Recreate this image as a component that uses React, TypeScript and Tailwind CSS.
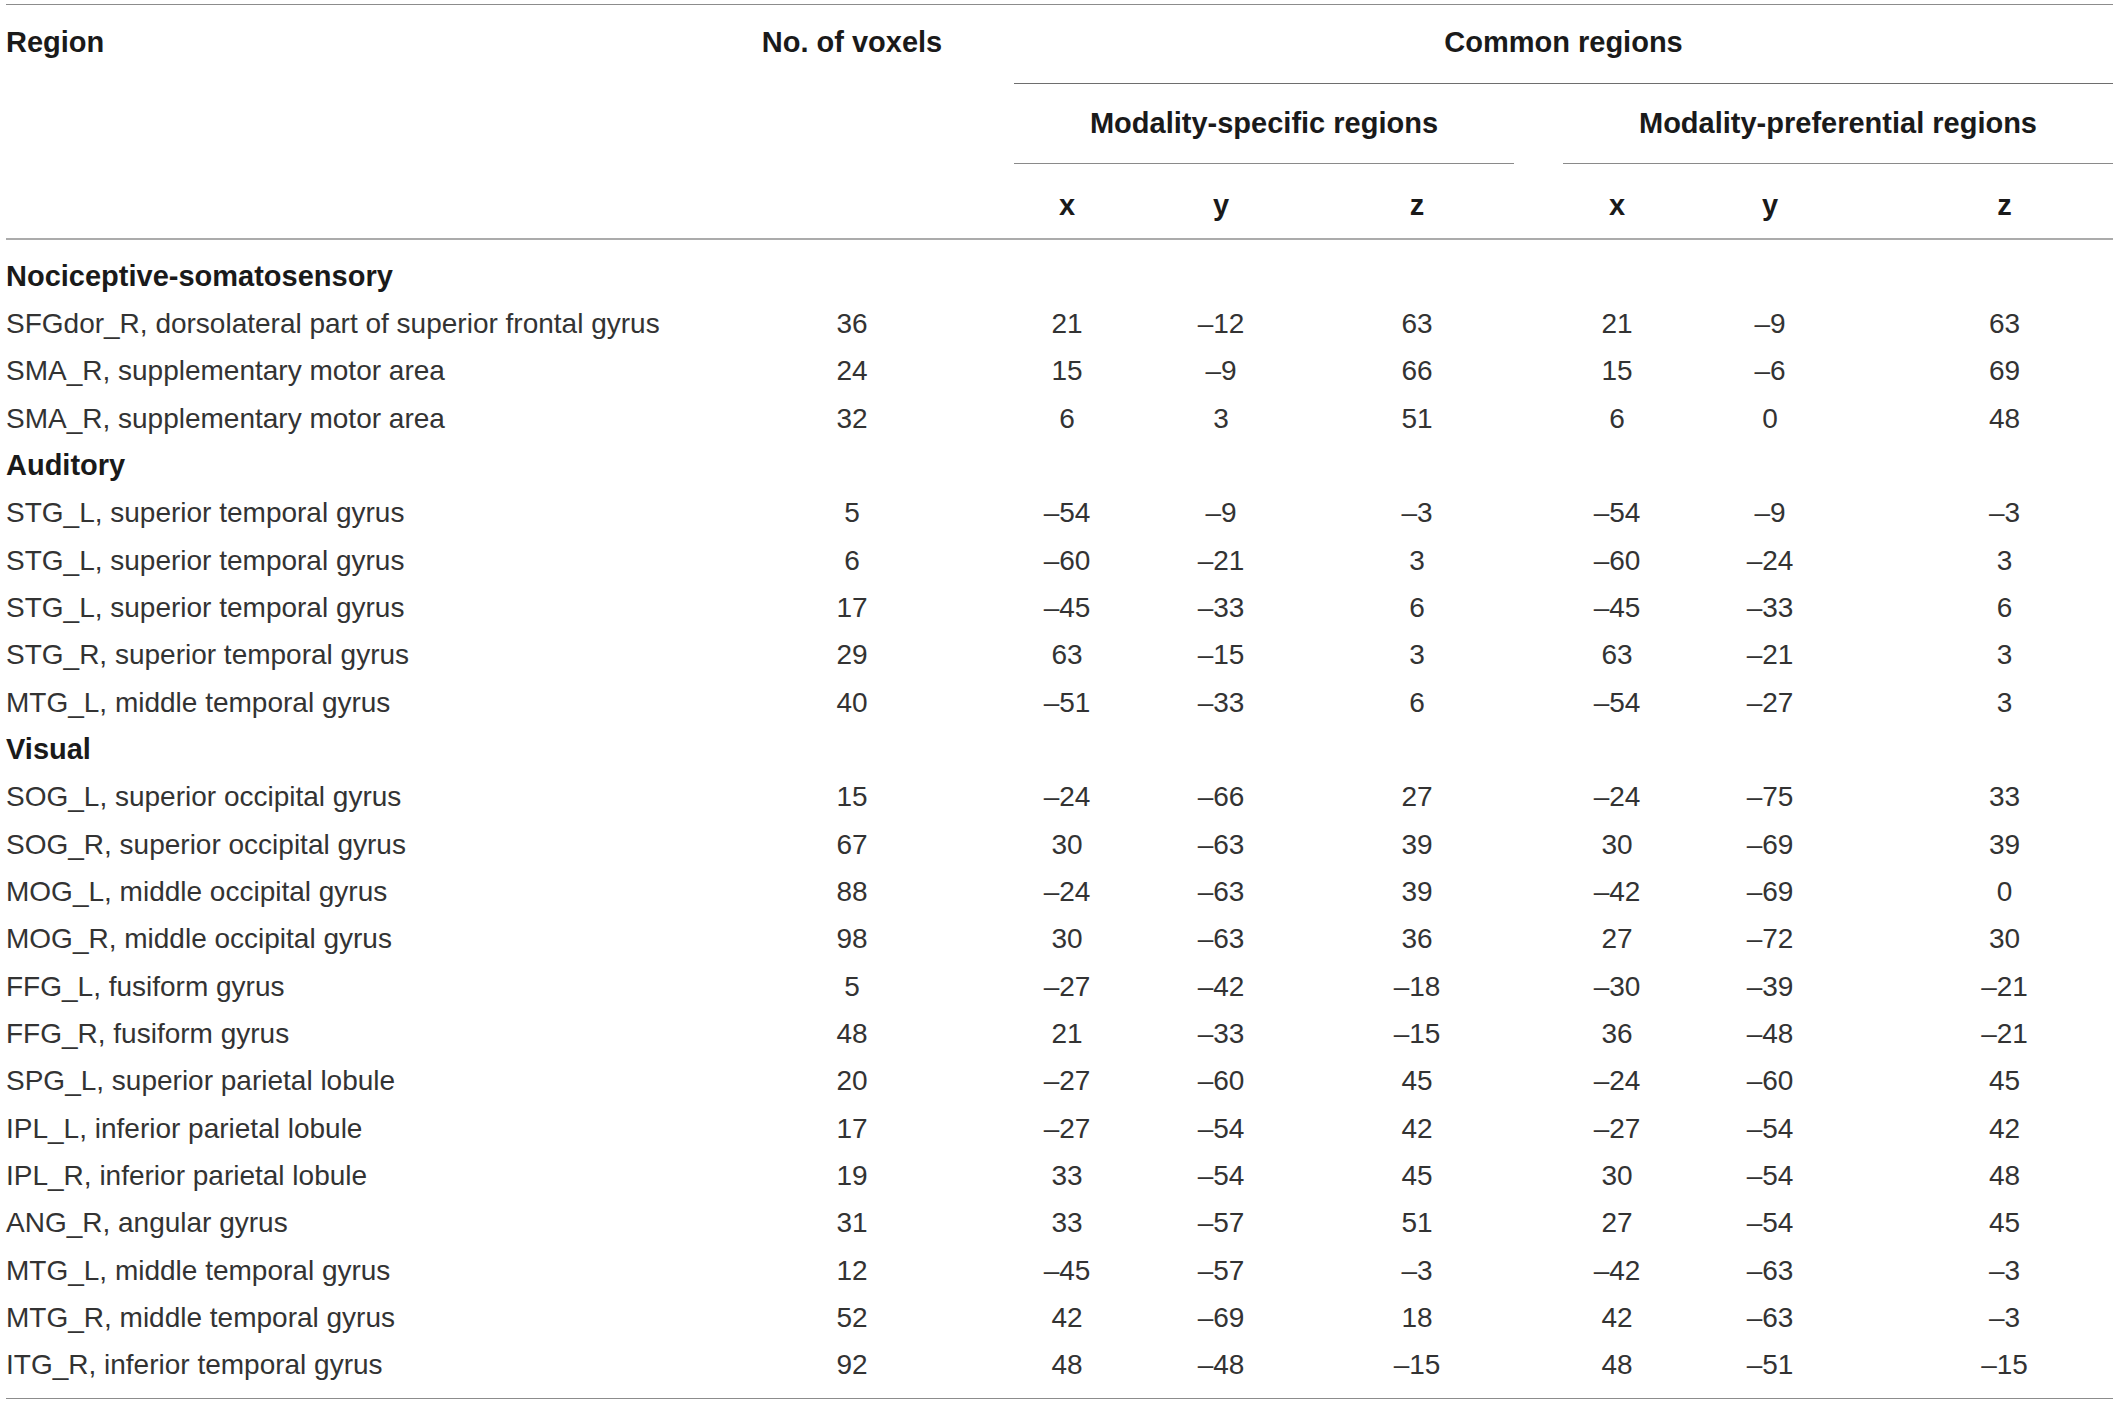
import React from 'react';

type Row = { name: string; vox: string; a: string[]; b: string[] };
type Group = { title: string; rows: Row[] };

const groups: Group[] = [
  {
    title: 'Nociceptive-somatosensory',
    rows: [
      { name: 'SFGdor_R, dorsolateral part of superior frontal gyrus', vox: '36', a: ['21', '–12', '63'], b: ['21', '–9', '63'] },
      { name: 'SMA_R, supplementary motor area', vox: '24', a: ['15', '–9', '66'], b: ['15', '–6', '69'] },
      { name: 'SMA_R, supplementary motor area', vox: '32', a: ['6', '3', '51'], b: ['6', '0', '48'] },
    ],
  },
  {
    title: 'Auditory',
    rows: [
      { name: 'STG_L, superior temporal gyrus', vox: '5', a: ['–54', '–9', '–3'], b: ['–54', '–9', '–3'] },
      { name: 'STG_L, superior temporal gyrus', vox: '6', a: ['–60', '–21', '3'], b: ['–60', '–24', '3'] },
      { name: 'STG_L, superior temporal gyrus', vox: '17', a: ['–45', '–33', '6'], b: ['–45', '–33', '6'] },
      { name: 'STG_R, superior temporal gyrus', vox: '29', a: ['63', '–15', '3'], b: ['63', '–21', '3'] },
      { name: 'MTG_L, middle temporal gyrus', vox: '40', a: ['–51', '–33', '6'], b: ['–54', '–27', '3'] },
    ],
  },
  {
    title: 'Visual',
    rows: [
      { name: 'SOG_L, superior occipital gyrus', vox: '15', a: ['–24', '–66', '27'], b: ['–24', '–75', '33'] },
      { name: 'SOG_R, superior occipital gyrus', vox: '67', a: ['30', '–63', '39'], b: ['30', '–69', '39'] },
      { name: 'MOG_L, middle occipital gyrus', vox: '88', a: ['–24', '–63', '39'], b: ['–42', '–69', '0'] },
      { name: 'MOG_R, middle occipital gyrus', vox: '98', a: ['30', '–63', '36'], b: ['27', '–72', '30'] },
      { name: 'FFG_L, fusiform gyrus', vox: '5', a: ['–27', '–42', '–18'], b: ['–30', '–39', '–21'] },
      { name: 'FFG_R, fusiform gyrus', vox: '48', a: ['21', '–33', '–15'], b: ['36', '–48', '–21'] },
      { name: 'SPG_L, superior parietal lobule', vox: '20', a: ['–27', '–60', '45'], b: ['–24', '–60', '45'] },
      { name: 'IPL_L, inferior parietal lobule', vox: '17', a: ['–27', '–54', '42'], b: ['–27', '–54', '42'] },
      { name: 'IPL_R, inferior parietal lobule', vox: '19', a: ['33', '–54', '45'], b: ['30', '–54', '48'] },
      { name: 'ANG_R, angular gyrus', vox: '31', a: ['33', '–57', '51'], b: ['27', '–54', '45'] },
      { name: 'MTG_L, middle temporal gyrus', vox: '12', a: ['–45', '–57', '–3'], b: ['–42', '–63', '–3'] },
      { name: 'MTG_R, middle temporal gyrus', vox: '52', a: ['42', '–69', '18'], b: ['42', '–63', '–3'] },
      { name: 'ITG_R, inferior temporal gyrus', vox: '92', a: ['48', '–48', '–15'], b: ['48', '–51', '–15'] },
    ],
  },
];

// same column template for header and body rows
const cols = 'grid grid-cols-[696px_300px_130px_178px_214px_186px_120px_66px_217px]';

const DataRow: React.FC<{ row: Row }> = ({ row }) => (
  <div className={`${cols} h-[47.33px] items-center text-[28px] text-[#333]`}>
    <div className="whitespace-nowrap">{row.name}</div>
    <div className="text-center">{row.vox}</div>
    <div className="text-center">{row.a[0]}</div>
    <div className="text-center">{row.a[1]}</div>
    <div className="text-center">{row.a[2]}</div>
    <div className="text-center">{row.b[0]}</div>
    <div className="text-center">{row.b[1]}</div>
    <div />
    <div className="text-center">{row.b[2]}</div>
  </div>
);

export default function App() {
  return (
    <div className="min-h-screen bg-white pt-[4px] font-['Liberation_Sans',Arial,sans-serif] leading-none">
      <div className="ml-[6px] w-[2107px] border-t border-[#8c8c8c]">
        {/* header */}
        <div className={`${cols} grid-rows-[79px_80px_74px] border-b-2 border-[#ababab] text-[29px] font-bold text-[#1a1a1a]`}>
          <div className="col-start-1 row-start-1 flex items-center pb-[4px]">Region</div>
          <div className="col-start-2 row-start-1 flex items-center justify-center pb-[4px]">No. of voxels</div>
          <div className="col-start-3 col-end-10 row-start-1 ml-[12px] flex items-center justify-center border-b-[1.5px] border-[#6e6e6e] pb-[3px]">
            Common regions
          </div>
          <div className="col-start-3 col-end-6 row-start-2 ml-[12px] mr-[10px] flex items-center justify-center border-b-[1.5px] border-[#8a8a8a]">
            Modality-specific regions
          </div>
          <div className="col-start-6 col-end-10 row-start-2 ml-[39px] flex items-center justify-center border-b-[1.5px] border-[#8a8a8a]">
            Modality-preferential regions
          </div>
          <div className="col-start-3 row-start-3 flex items-center justify-center pt-[8px]">x</div>
          <div className="col-start-4 row-start-3 flex items-center justify-center pt-[8px]">y</div>
          <div className="col-start-5 row-start-3 flex items-center justify-center pt-[8px]">z</div>
          <div className="col-start-6 row-start-3 flex items-center justify-center pt-[8px]">x</div>
          <div className="col-start-7 row-start-3 flex items-center justify-center pt-[8px]">y</div>
          <div className="col-start-9 row-start-3 flex items-center justify-center pt-[8px]">z</div>
        </div>

        {/* body */}
        <div className="border-b border-[#8c8c8c] pt-[13px] pb-[9px]">
          {groups.map((g) => (
            <React.Fragment key={g.title}>
              <div className="flex h-[47.33px] items-center text-[29px] font-bold text-[#1a1a1a]">{g.title}</div>
              {g.rows.map((r, i) => (
                <DataRow key={i} row={r} />
              ))}
            </React.Fragment>
          ))}
        </div>
      </div>
    </div>
  );
}
